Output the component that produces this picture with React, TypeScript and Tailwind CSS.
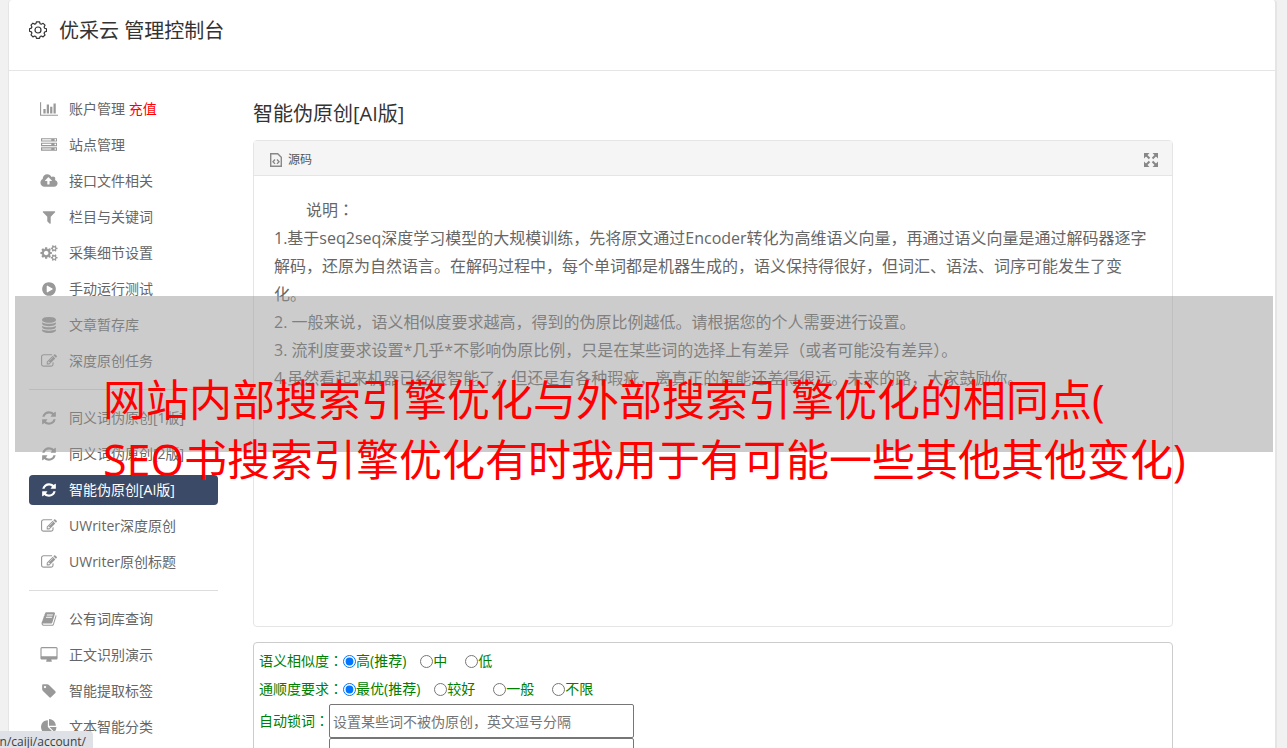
import React, { useState } from "react";

// Types for the sidebar
type IconShape = {
  viewBox: string;
  width: string;
  d: string;
};

type NavItem = {
  id: string;
  label: string;
  icon: keyof typeof ICONS;
  extra?: string;
};

// --- ICONS ---
const ICONS = {
  chart: {
    viewBox: "0 0 2048 1792",
    width: "w-[18px]",
    d: "M640 896v512h-256v-512h256zm384-512v1024h-256v-1024h256zm1024 1152v128h-2048v-1536h128v1408h1920zm-640-896v768h-256v-768h256zm384-384v1152h-256v-1152h256z",
  },
  server: {
    viewBox: "0 0 1792 1792",
    width: "w-4",
    d: "M128 1408h1024v-128h-1024v128zm0-512h1024v-128h-1024v128zm1568 448q0-40-28-68t-68-28-68 28-28 68 28 68 68 28 68-28 28-68zm-1568-960h1024v-128h-1024v128zm1568 448q0-40-28-68t-68-28-68 28-28 68 28 68 68 28 68-28 28-68zm0-512q0-40-28-68t-68-28-68 28-28 68 28 68 68 28 68-28 28-68zm96 832v384h-1792v-384h1792zm0-512v384h-1792v-384h1792zm0-512v384h-1792v-384h1792z",
  },
  cloud: {
    viewBox: "0 0 1920 1792",
    width: "w-[18px]",
    d: "M1280 864q0-14-9-23l-352-352q-9-9-23-9t-23 9l-351 351q-10 12-10 24 0 14 9 23t23 9h224v352q0 13 9.5 22.5t22.5 9.5h192q13 0 22.5-9.5t9.5-22.5v-352h224q13 0 22.5-9.5t9.5-22.5zm640 288q0 159-112.5 271.5t-271.5 112.5h-1088q-185 0-316.5-131.5t-131.5-316.5q0-130 70-240t188-165q-2-30-2-43 0-212 150-362t362-150q156 0 285.5 87t188.5 231q71-62 166-62 106 0 181 75t75 181q0 76-41 138 130 31 213.5 135.5t83.5 238.5z",
  },
  filter: {
    viewBox: "0 0 1792 1792",
    width: "w-4",
    d: "M1595 295q17 41-14 70l-493 493v742q0 42-39 59-13 5-25 5-27 0-45-19l-256-256q-19-19-19-45v-486l-493-493q-31-29-14-70 17-39 59-39h1280q42 0 59 39z",
  },
  cogs: {
    viewBox: "0 0 1920 1792",
    width: "w-[18px]",
    d: "M896 896q0-106-75-181t-181-75-181 75-75 181 75 181 181 75 181-75 75-181zm768 512q0-52-38-90t-90-38-90 38-38 90q0 53 37.500 90.500t90.500 37.500 90.500-37.500 37.500-90.500zm0-1024q0-52-38-90t-90-38-90 38-38 90q0 53 37.500 90.500t90.500 37.500 90.500-37.500 37.500-90.500zm-384 421v185q0 10-7 19.500t-16 10.500l-155 24q-11 35-32 76 34 48 90 115 7 11 7 20 0 12-7 19-23 30-82.500 89.500t-78.500 59.500q-11 0-21-7l-115-90q-37 19-77 31-11 108-23 155-7 24-30 24h-186q-11 0-20-7.500t-10-17.500l-23-153q-34-10-75-31l-118 89q-7 7-20 7-11 0-21-8-144-133-144-160 0-9 7-19 10-14 41-53t47-61q-23-44-35-82l-152-24q-10-1-17-9.500t-7-19.500v-185q0-10 7-19.500t16-10.500l155-24q11-35 32-76-34-48-90-115-7-11-7-20 0-12 7-20 22-30 82-89t79-59q11 0 21 7l115 90q34-18 77-32 11-108 23-154 7-24 30-24h186q11 0 20 7.500t10 17.500l23 153q34 10 75 31l118-89q8-7 20-7 11 0 21 8 144 133 144 160 0 8-7 19-12 16-42 54t-45 60q23 48 34 82l152 23q10 2 17 10.500t7 19.500zm640 533v140q0 16-149 31-12 27-30 52 51 113 51 138 0 4-4 7-122 71-124 71-8 0-46-47t-52-68q-20 2-30 2t-30-2q-14 21-52 68t-46 47q-2 0-124-71-4-3-4-7 0-25 51-138-18-25-30-52-149-15-149-31v-140q0-16 149-31 13-29 30-52-51-113-51-138 0-4 4-7 4-2 35-20t59-34 30-16q8 0 46 46.500t52 67.500q20-2 30-2t30 2q51-71 92-112l6-2q4 0 124 70 4 3 4 7 0 25-51 138 17 23 30 52 149 15 149 31zm0-1024v140q0 16-149 31-12 27-30 52 51 113 51 138 0 4-4 7-122 71-124 71-8 0-46-47t-52-68q-20 2-30 2t-30-2q-14 21-52 68t-46 47q-2 0-124-71-4-3-4-7 0-25 51-138-18-25-30-52-149-15-149-31v-140q0-16 149-31 13-29 30-52-51-113-51-138 0-4 4-7 4-2 35-20t59-34 30-16q8 0 46 46.500t52 67.500q20-2 30-2t30 2q51-71 92-112l6-2q4 0 124 70 4 3 4 7 0 25-51 138 17 23 30 52 149 15 149 31z",
  },
  play: {
    viewBox: "0 0 1792 1792",
    width: "w-4",
    d: "M896 128q209 0 385.5 103t279.500 279.500 103 385.500-103 385.500-279.500 279.500-385.500 103-385.500-103-279.500-279.500-103-385.500 103-385.500 279.500-279.500 385.500-103zm384 823q32-18 32-55t-32-55l-544-320q-31-19-64-1-32 19-32 56v640q0 37 32 56 16 8 32 8 17 0 32-9z",
  },
  database: {
    viewBox: "0 0 1792 1792",
    width: "w-4",
    d: "M896 768q237 0 443-43t325-127v170q0 69-103 128t-280 93.500-385 34.500-385-34.500-280-93.500-103-128v-170q119 84 325 127t443 43zm0 768q237 0 443-43t325-127v170q0 69-103 128t-280 93.500-385 34.500-385-34.500-280-93.500-103-128v-170q119 84 325 127t443 43zm0-384q237 0 443-43t325-127v170q0 69-103 128t-280 93.500-385 34.500-385-34.500-280-93.500-103-128v-170q119 84 325 127t443 43zm0-1152q208 0 385 34.500t280 93.500 103 128v128q0 69-103 128t-280 93.500-385 34.500-385-34.500-280-93.500-103-128v-128q0-69 103-128t280-93.500 385-34.500z",
  },
  edit: {
    viewBox: "0 0 1792 1792",
    width: "w-4",
    d: "M888 1184l116-116-152-152-116 116v56h96v96h56zm440-720q-16-16-33 1l-350 350q-17 17-1 33t33-1l350-350q17-17 1-33zm80 594v190q0 119-84.500 203.500t-203.500 84.500h-832q-119 0-203.500-84.500t-84.500-203.500v-832q0-119 84.500-203.500t203.500-84.500h832q63 0 117 25 15 7 18 23 3 17-9 29l-49 49q-14 14-32 8-23-6-45-6h-832q-66 0-113 47t-47 113v832q0 66 47 113t113 47h832q66 0 113-47t47-113v-126q0-13 9-22l64-64q15-15 35-7t20 29zm-96-738l288 288-672 672h-288v-288zm444 132l-92 92-288-288 92-92q28-28 68-28t68 28l152 152q28 28 28 68t-28 68z",
  },
  refresh: {
    viewBox: "0 0 1792 1792",
    width: "w-4",
    d: "M1639 1056q0 5-1 7-64 268-268 434.500t-478 166.500q-146 0-282.500-55t-243.500-157l-129 129q-19 19-45 19t-45-19-19-45v-448q0-26 19-45t45-19h448q26 0 45 19t19 45-19 45l-137 137q71 66 161 102t187 36q134 0 250-65t186-179q11-17 53-117 8-23 30-23h192q13 0 22.500 9.500t9.500 22.500zm25-800v448q0 26-19 45t-45 19h-448q-26 0-45-19t-19-45 19-45l138-138q-148-137-349-137-134 0-250 65t-186 179q-11 17-53 117-8 23-30 23h-199q-13 0-22.500-9.500t-9.500-22.500v-7q65-268 270-434.500t480-166.500q146 0 284 55.500t245 156.500l130-129q19-19 45-19t45 19 19 45z",
  },
  book: {
    viewBox: "0 0 1792 1792",
    width: "w-4",
    d: "M1703 478q40 57 18 129l-275 906q-19 64-76.500 107.500t-122.500 43.500h-923q-77 0-148.500-53.500t-99.500-131.500q-24-67-2-127 0-4 3-27t4-37q1-8-3-21.500t-3-19.500q2-11 8-21t16.500-23.500 16.500-23.500q23-38 45-91.500t30-91.500q3-10 .5-30t-.5-28q3-11 17-28t17-23q21-36 42-92t25-90q1-9-2.500-32t.5-28q4-13 22-30.500t22-22.500q19-26 42.500-84.500t27.500-96.500q1-8-3-25.500t-2-26.500q2-8 9-18t18-23 17-21q8-12 16.500-30.500t15-35 16-36 19.500-32 26.500-23.500 36-11.500 47.500 5.500l-1 3q38-9 51-9h761q74 0 114 56t18 130l-274 906q-36 119-71.500 153.500t-128.500 34.500h-869q-27 0-38 15-11 16-1 43 24 70 144 70h923q29 0 56-15.500t35-41.500l300-987q7-22 5-57 38 15 59 43zm-1064 2q-4 13 2 22.500t20 9.500h608q13 0 25.500-9.500t16.500-22.500l21-64q4-13-2-22.500t-20-9.500h-608q-13 0-25.500 9.500t-16.500 22.500zm-83 256q-4 13 2 22.500t20 9.500h608q13 0 25.500-9.500t16.500-22.500l21-64q4-13-2-22.500t-20-9.500h-608q-13 0-25.500 9.500t-16.500 22.500z",
  },
  desktop: {
    viewBox: "-64 0 1920 1792",
    width: "w-[18px]",
    d: "M1728 992v-832q0-13-9.500-22.500t-22.500-9.500h-1600q-13 0-22.500 9.500t-9.500 22.500v832q0 13 9.500 22.500t22.500 9.500h1600q13 0 22.500-9.500t9.500-22.500zm128-832v1088q0 66-47 113t-113 47h-544q0 37 16 77.500t32 71 16 43.500q0 26-19 45t-45 19h-512q-26 0-45-19t-19-45q0-14 16-44t32-70 16-78h-544q-66 0-113-47t-47-113v-1088q0-66 47-113t113-47h1600q66 0 113 47t47 113z",
  },
  tag: {
    viewBox: "0 0 1792 1792",
    width: "w-4",
    d: "M576 448q0-53-37.500-90.500t-90.500-37.500-90.500 37.500-37.500 90.500 37.500 90.500 90.500 37.500 90.500-37.500 37.500-90.500zm1067 576q0 53-37 90l-491 492q-39 37-91 37-53 0-90-37l-715-716q-38-37-64.500-101t-26.500-117v-416q0-52 38-90t90-38h416q53 0 117 26.500t102 64.500l715 714q37 39 37 91z",
  },
  pie: {
    viewBox: "0 0 1792 1792",
    width: "w-4",
    d: "M768 890l546 546q-106 108-247.500 168t-298.500 60q-209 0-385.500-103t-279.500-279.500-103-385.500 103-385.500 279.500-279.500 385.500-103v762zm187 6h773q0 157-60 298.500t-168 247.500zm709-128h-768v-768q209 0 385.500 103t279.500 279.500 103 385.500z",
  },
} satisfies Record<string, IconShape>;

// --- SIDEBAR DATA ---
const NAV_GROUPS: NavItem[][] = [
  [
    { id: "account", label: "账户管理", icon: "chart", extra: "充值" },
    { id: "site", label: "站点管理", icon: "server" },
    { id: "interface", label: "接口文件相关", icon: "cloud" },
    { id: "column", label: "栏目与关键词", icon: "filter" },
    { id: "detail", label: "采集细节设置", icon: "cogs" },
    { id: "run", label: "手动运行测试", icon: "play" },
    { id: "store", label: "文章暂存库", icon: "database" },
    { id: "task", label: "深度原创任务", icon: "edit" },
  ],
  [
    { id: "syn1", label: "同义词伪原创[1版]", icon: "refresh" },
    { id: "syn2", label: "同义词伪原创[2版]", icon: "refresh" },
    { id: "ai", label: "智能伪原创[AI版]", icon: "refresh" },
    { id: "uwriter", label: "UWriter深度原创", icon: "edit" },
    { id: "uwriter-title", label: "UWriter原创标题", icon: "edit" },
  ],
  [
    { id: "words", label: "公有词库查询", icon: "book" },
    { id: "recognize", label: "正文识别演示", icon: "desktop" },
    { id: "tags", label: "智能提取标签", icon: "tag" },
    { id: "classify", label: "文本智能分类", icon: "pie" },
  ],
];

const NOTES = [
  "1.基于seq2seq深度学习模型的大规模训练，先将原文通过Encoder转化为高维语义向量，再通过语义向量是通过解码器逐字解码，还原为自然语言。在解码过程中，每个单词都是机器生成的，语义保持得很好，但词汇、语法、词序可能发生了变化。",
  "2. 一般来说，语义相似度要求越高，得到的伪原比例越低。请根据您的个人需要进行设置。",
  "3. 流利度要求设置*几乎*不影响伪原比例，只是在某些词的选择上有差异（或者可能没有差异）。",
  "4.虽然看起来机器已经很智能了，但还是有各种瑕疵，离真正的智能还差得很远。未来的路，大家鼓励你。",
];

const SIMILARITY = ["高(推荐)", "中", "低"];
const FLUENCY = ["最优(推荐)", "较好", "一般", "不限"];

// The TC face centres the full-width colon
function Colon() {
  return <span className="font-['Open_Sans','Noto_Sans_CJK_TC',sans-serif]">：</span>;
}

function NavIcon({ name }: { name: keyof typeof ICONS }) {
  const icon = ICONS[name];
  return (
    <span className="flex w-5 shrink-0 justify-center">
      <svg viewBox={icon.viewBox} className={`h-4 ${icon.width}`} fill="currentColor" aria-hidden="true">
        <path d={icon.d} />
      </svg>
    </span>
  );
}

function GearIcon() {
  return (
    <svg viewBox="0 0 18 18" className="h-[18px] w-[18px]" fill="none" stroke="currentColor" strokeWidth="1.2" strokeLinejoin="round" aria-hidden="true">
      <path d="M7.5 .8h3l.6 1.900 1.200.5 1.800-.9 1.900 1.900-.9 1.800.5 1.200 1.900.6v2.600l-1.900.6-.5 1.200.9 1.800-1.900 1.900-1.800-.9-1.200.5-.6 1.900h-3l-.6-1.900-1.200-.5-1.800.9L2 13.900l.9-1.800-.5-1.200-1.900-.6V7.700l1.900-.6.5-1.200L2 4.100l1.900-1.900 1.800.9 1.200-.5z" />
      <circle cx="9" cy="9" r="3" />
    </svg>
  );
}

function RadioRow({ title, name, options }: { title: string; name: string; options: string[] }) {
  const [picked, setPicked] = useState(options[0]);
  return (
    <fieldset className="flex h-7 items-center">
      <legend className="float-left leading-7">
        {title}
        <Colon />
      </legend>
      <div className="flex items-center gap-[18px]">
        {options.map((option) => (
          <label key={option} className="flex items-center first:-mr-1">
            <input
              type="radio"
              name={name}
              checked={picked === option}
              onChange={() => setPicked(option)}
              className="h-[13px] w-[13px]"
            />
            {option}
          </label>
        ))}
      </div>
    </fieldset>
  );
}

export default function App() {
  const [activeItem, setActiveItem] = useState("ai");

  return (
    <div className="relative h-screen w-full overflow-hidden bg-[#f1f1f1] pr-[10px] pl-2 font-['Open_Sans','Noto_Sans_CJK_SC',sans-serif] text-sm text-[#666]">
      {/* Console shell */}
      <div className="min-h-full rounded-t border-r-2 border-l border-[#e5e5e5] bg-white">
        {/* --- HEADER --- */}
        <header className="flex h-[71px] items-start gap-3 border-b border-[#e5e5e5] px-5 pt-[17px] text-[#333]">
          <span className="pt-1">
            <GearIcon />
          </span>
          <h1 className="text-xl leading-7">优采云 管理控制台</h1>
        </header>

        <div className="flex pr-[102px] pl-5">
          {/* Sidebar */}
          <nav className="w-[189px] shrink-0 pt-[23px]">
            {NAV_GROUPS.map((group, index) => (
              <ul
                key={index}
                className={`flex flex-col gap-[6px] ${index > 0 ? "mt-[13px] border-t border-[#ddd] pt-[13px]" : ""}`}
              >
                {group.map((item) => {
                  const active = item.id === activeItem;
                  return (
                    <li key={item.id}>
                      <a
                        href={`#${item.id}`}
                        onClick={() => setActiveItem(item.id)}
                        className={`flex h-[30px] items-center gap-[10px] rounded px-[10px] whitespace-nowrap ${active ? "bg-[#3b4a66] text-white" : "text-[#666]"}`}
                      >
                        <span className={active ? "text-white" : "text-[#999]"}>
                          <NavIcon name={item.icon} />
                        </span>
                        <span>
                          {item.label}
                          {item.extra && <span className="text-[#f00]"> {item.extra}</span>}
                        </span>
                      </a>
                    </li>
                  );
                })}
              </ul>
            ))}
          </nav>

          {/* Main Content */}
          <main className="ml-[35px] min-w-0 flex-1 pt-[29px]">
            <h2 className="text-xl leading-7 text-[#333]">智能伪原创[AI版]</h2>

            {/* Editor panel */}
            <section className="mt-3 rounded border border-[#e5e5e5]">
              <div className="flex h-[35px] items-center justify-between border-b border-[#e5e5e5] bg-[#f5f5f5] pr-[14px] pl-4">
                <button className="flex items-center gap-[6px] pt-1 text-xs leading-4 text-[#555]">
                  <svg viewBox="0 0 12 14" className="h-[14px] w-3" fill="none" stroke="#888" strokeWidth="1.4" aria-hidden="true">
                    <path d="M.7.7h7l3.600 3.600v9H.7z" />
                    <path d="M5 6.500 3 8.700l2 2.200M7 6.500l2 2.200-2 2.200" />
                  </svg>
                  源码
                </button>
                <button aria-label="全屏" className="mt-1">
                  <svg viewBox="0 0 14 14" className="h-[14px] w-[14px]" fill="#888" stroke="#888" strokeWidth="2" aria-hidden="true">
                    <path stroke="none" d="M0 0h5.500L0 5.500zM14 0v5.500L8.500 0zM0 14V8.500L5.500 14zM14 14H8.500L14 8.500z" />
                    <path d="M2 2l3.500 3.500M12 2 8.500 5.500M2 12l3.500-3.500M12 12 8.500 8.500" />
                  </svg>
                </button>
              </div>
              <div className="min-h-[450px] p-5 text-base leading-7">
                <p className="indent-8">
                  说明
                  <Colon />
                </p>
                {NOTES.map((note) => (
                  <p key={note}>{note}</p>
                ))}
              </div>
            </section>

            {/* Options */}
            <form className="mt-[15px] rounded border border-[#ccc] px-[5px] py-1 text-[#008000]">
              <RadioRow title="语义相似度" name="similarity" options={SIMILARITY} />
              <RadioRow title="通顺度要求" name="fluency" options={FLUENCY} />
              <div className="mt-px flex items-center">
                <label htmlFor="lock-words" className="w-[70px]">
                  自动锁词
                  <Colon />
                </label>
                <input
                  id="lock-words"
                  type="text"
                  placeholder="设置某些词不被伪原创，英文逗号分隔"
                  className="h-[34px] w-[305px] rounded-xs border border-[#767676] bg-white px-[3px] text-[#333] placeholder:text-[#757575]"
                />
              </div>
              <textarea
                aria-label="锁定词列表"
                className="ml-[70px] block h-20 w-[305px] rounded-xs border border-[#767676] bg-white px-[3px] text-[#333]"
              />
            </form>
          </main>
        </div>
      </div>

      {/* Banner over the page */}
      <div className="absolute top-[296px] right-[14px] left-[15px] h-[156px] bg-[#999]/50" />
      <p className="absolute top-[370px] left-[103px] text-[43px] leading-[60px] whitespace-nowrap text-[#f00]">
        网站内部搜索引擎优化与外部搜索引擎优化的相同点(
        <br />
        SEO书搜索引擎优化有时我用于有可能一些其他其他变化)
      </p>

      {/* Link address bubble */}
      <div className="absolute bottom-0 left-0 h-[17px] w-[93px] overflow-hidden rounded-tr bg-[#dee1e6]">
        <span className="float-right pr-[7px] text-xs leading-[22px] whitespace-nowrap text-[#3c4043]">n/caiji/account/</span>
      </div>
    </div>
  );
}
